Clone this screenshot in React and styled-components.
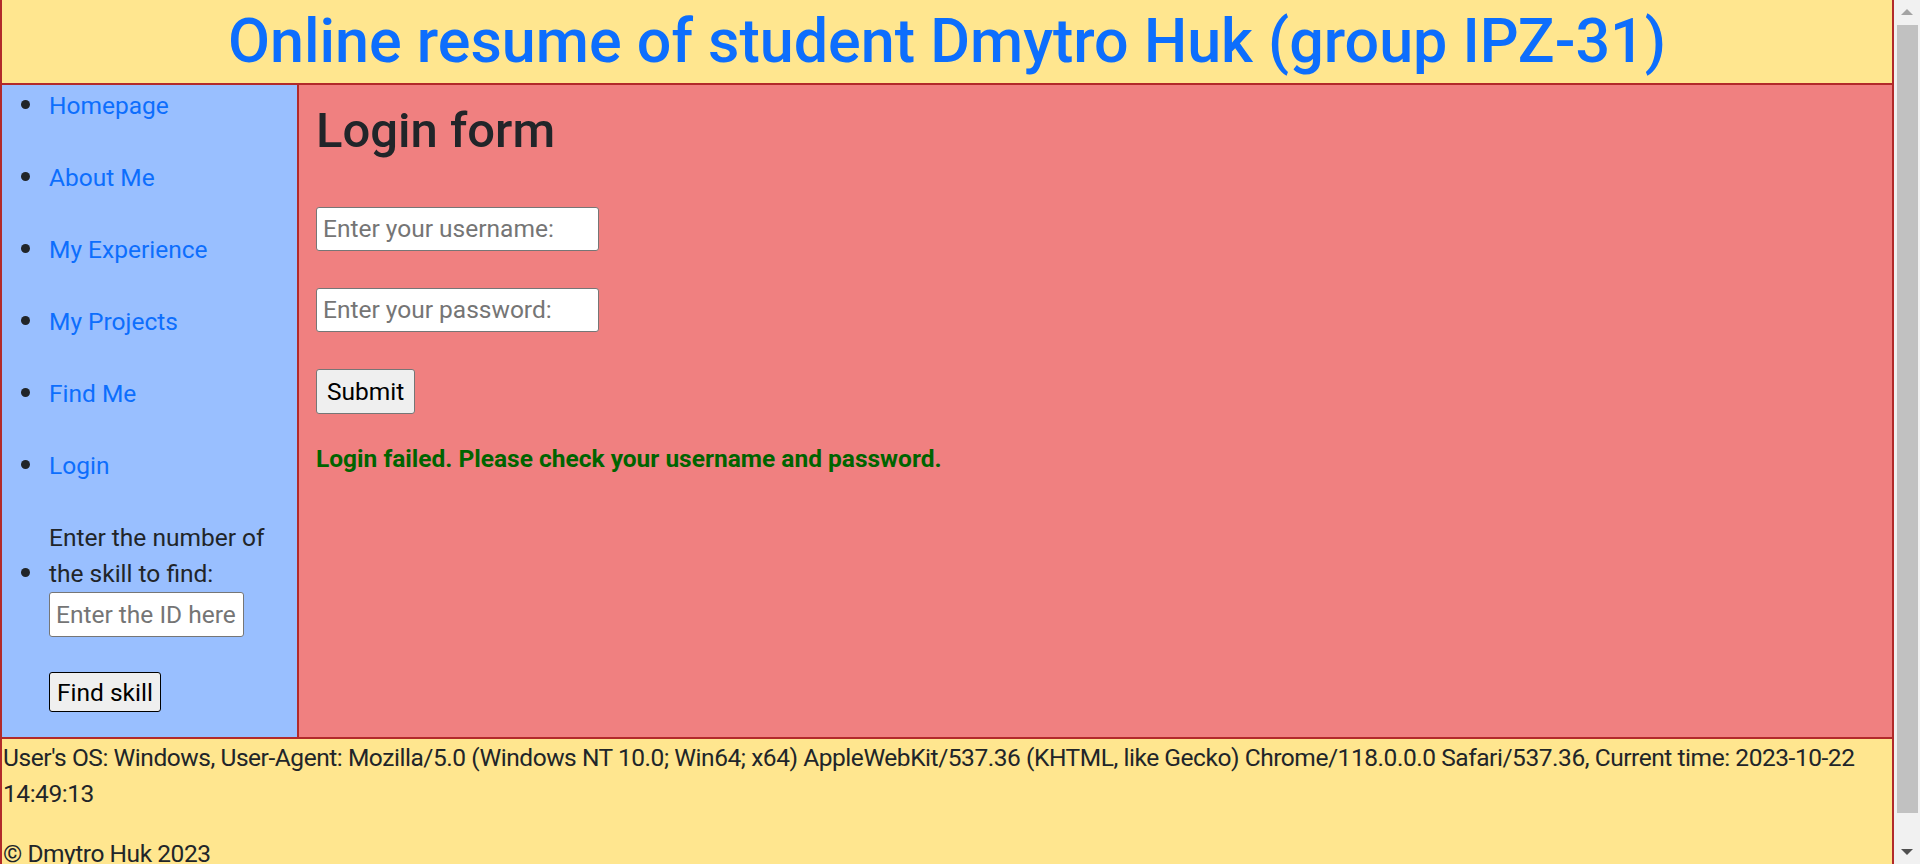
import React from "react";
import styled, { createGlobalStyle } from "styled-components";

const GlobalStyle = createGlobalStyle`
  body {
    margin: 0;
    font-family: Roboto, "Liberation Sans", sans-serif;
    font-size: 24.5px;
    line-height: 36px;
    color: #212529;
    background: #ffffff;
  }
  * {
    box-sizing: border-box;
  }
`;

const Window = styled.div`
  display: flex;
  align-items: flex-start;
`;

const Page = styled.div`
  flex: 1;
  min-width: 0;
  border-left: 2px solid #b22a2a;
  border-right: 2px solid #b22a2a;
`;

const Header = styled.header`
  height: 85px;
  display: flex;
  align-items: center;
  justify-content: center;
  background: #ffe68f;
  border-bottom: 2px solid #b22a2a;
`;

const Title = styled.h1`
  margin: 0;
  font-size: 61px;
  font-weight: 500;
  line-height: 1.2;
  color: #0d6efd;
`;

const Body = styled.div`
  display: grid;
  grid-template-columns: 297px 1fr;
  height: 652px;
  overflow: hidden;
`;

const Sidebar = styled.nav`
  background: #99bfff;
  border-right: 2px solid #b22a2a;
`;

const NavList = styled.ul`
  margin: 0;
  padding: 3px 0 0 47px;
  list-style: none;
`;

const NavItem = styled.li`
  margin-bottom: 36px;

  &::before {
    content: "";
    display: inline-block;
    width: 9px;
    height: 9px;
    margin: 0 19px 0 -28px;
    border-radius: 50%;
    background: #212529;
    vertical-align: 0.22em;
  }

  &:last-child {
    margin-bottom: 0;
  }
`;

const NavLink = styled.a`
  color: #0d6efd;
  text-decoration: none;
`;

const SkillLabel = styled.label`
  display: inline-block;
  width: 230px;
`;

const TextInput = styled.input`
  display: block;
  margin: 0;
  width: ${(p) => p.$width}px;
  height: ${(p) => p.$height}px;
  padding: 0 6px;
  font-family: inherit;
  font-size: 24.5px;
  color: #212529;
  background: #ffffff;
  border: 1px solid #767676;
  border-radius: 3px;

  &::placeholder {
    color: #757575;
  }
`;

const Button = styled.button`
  display: block;
  height: ${(p) => p.$height}px;
  padding: 0 ${(p) => p.$pad}px;
  font-family: inherit;
  font-size: 24.5px;
  color: #000000;
  background: #efefef;
  border: 1px solid ${(p) => (p.$dark ? "#000000" : "#767676")};
  border-radius: 3px;
`;

const SkillForm = styled.form`
  display: inline;
  margin: 0;

  ${Button} {
    margin-top: 35px;
  }
`;

const Main = styled.main`
  background: #f08080;
  padding: 17px 17px;
`;

const Heading = styled.h2`
  margin: 0 0 46px;
  font-size: 49px;
  font-weight: 500;
  line-height: 1.2;
  color: #212529;
`;

const LoginForm = styled.form`
  display: flex;
  flex-direction: column;
  align-items: flex-start;
  gap: 37px;
`;

const ErrorText = styled.p`
  margin: 27px 0 0;
  font-weight: 700;
  color: #006400;
`;

const Footer = styled.footer`
  background: #ffe68f;
  border-top: 2px solid #b22a2a;
  padding: 1px 1px 24px;
`;

const FooterLine = styled.p`
  margin: 0 0 24px;
  letter-spacing: -0.45px;

  &:last-child {
    margin-bottom: 0;
  }
`;

const Scrollbar = styled.div`
  width: 26px;
  height: 864px;
  flex-shrink: 0;
  display: flex;
  flex-direction: column;
  background: #f1f1f1;
`;

const ScrollArrow = styled.div`
  height: 24px;
  display: flex;
  align-items: center;
  justify-content: center;

  &::before {
    content: "";
    border-left: 6px solid transparent;
    border-right: 6px solid transparent;
    ${(p) =>
      p.$down
        ? "border-top: 6px solid #505050;"
        : "border-bottom: 6px solid #a3a3a3;"}
  }
`;

const ScrollTrack = styled.div`
  flex: 1;
  padding: 1px 2px 0 3px;
`;

const ScrollThumb = styled.div`
  height: 788px;
  background: #c1c1c1;
`;

const links = ["Homepage", "About Me", "My Experience", "My Projects", "Find Me", "Login"];

export default function App() {
  return (
    <>
      <GlobalStyle />
      <Window>
        <Page>
          <Header>
            <Title>Online resume of student Dmytro Huk (group IPZ-31)</Title>
          </Header>
          <Body>
            <Sidebar>
              <NavList>
                {links.map((name) => (
                  <NavItem key={name}>
                    <NavLink href="#">{name}</NavLink>
                  </NavItem>
                ))}
                <NavItem>
                  <SkillForm onSubmit={(e) => e.preventDefault()}>
                    <SkillLabel htmlFor="skill">Enter the number of the skill to find:</SkillLabel>
                    <TextInput id="skill" placeholder="Enter the ID here" $width={195} $height={45} />
                    <Button $height={40} $pad={7} $dark>Find skill</Button>
                  </SkillForm>
                </NavItem>
              </NavList>
            </Sidebar>
            <Main>
              <Heading>Login form</Heading>
              <LoginForm onSubmit={(e) => e.preventDefault()}>
                <TextInput placeholder="Enter your username:" $width={283} $height={44} />
                <TextInput type="password" placeholder="Enter your password:" $width={283} $height={44} />
                <Button $height={45} $pad={10}>Submit</Button>
              </LoginForm>
              <ErrorText>Login failed. Please check your username and password.</ErrorText>
            </Main>
          </Body>
          <Footer>
            <FooterLine>
              User's OS: Windows, User-Agent: Mozilla/5.0 (Windows NT 10.0; Win64; x64) AppleWebKit/537.36
              (KHTML, like Gecko) Chrome/118.0.0.0 Safari/537.36, Current time: 2023-10-22 14:49:13
            </FooterLine>
            <FooterLine>© Dmytro Huk 2023</FooterLine>
          </Footer>
        </Page>
        <Scrollbar>
          <ScrollArrow />
          <ScrollTrack>
            <ScrollThumb />
          </ScrollTrack>
          <ScrollArrow $down />
        </Scrollbar>
      </Window>
    </>
  );
}
